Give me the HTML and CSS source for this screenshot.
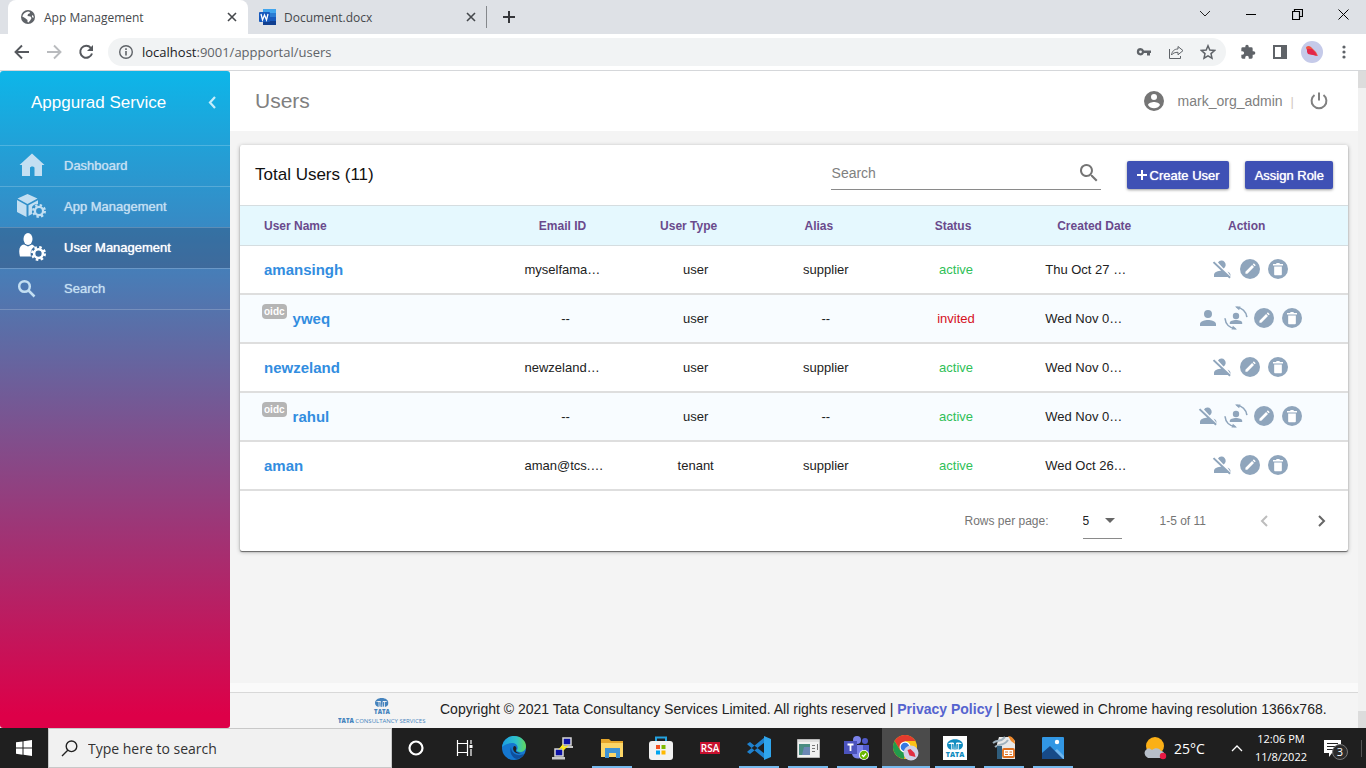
FILE: index.html
```html
<!DOCTYPE html>
<html lang="en">
<head>
<meta charset="utf-8">
<meta name="viewport" content="width=device-width, initial-scale=1">
<title>App Management</title>
<link rel="stylesheet" href="styles.css">
</head>
<body>
<svg class="defs" aria-hidden="true">
  <symbol id="person" viewBox="0 0 24 24"><path d="M12 12a4 4 0 1 0 0-8 4 4 0 0 0 0 8zm0 2c-3 0-8 1.300-8 4v2h16v-2c0-2.700-5-4-8-4z"/></symbol>
  <symbol id="person-off" viewBox="0 0 24 24"><path d="M8 5.500A4.200 4.200 0 1 1 13.500 11.500zM17.500 14.400c1.900.8 3 2 3 3.600v1zM2.800 5.800 4.200 4.400 20.800 20 19.400 21.400zM4 20v-2c0-2.700 4.300-4.200 7.500-4.400l6.500 6.400z"/></symbol>
  <symbol id="transfer" viewBox="0 0 24 24"><circle cx="12" cy="10" r="3.200"/><path d="M12 14c-2.800 0-6.200 1-6.200 2.800V18h12.400v-1.200C18.200 15 14.800 14 12 14z"/><path d="M12.500 1.300c5.500.3 9.700 4.200 10.400 9.800M11.500 22.700C5.600 22.200 1.500 18.200 1 12.300" fill="none" stroke="currentColor" stroke-width="1.600"/><path d="m11 .5 5.500 0-1.400 3.800zM13 23.500l-5.500 0 1.400-3.800z"/></symbol>
  <symbol id="edit" viewBox="0 0 24 24"><circle cx="12" cy="12" r="12"/><path fill="#fff" d="m6.500 15.300 8-8 2.300 2.300-8 8H6.500zM15.300 6.500l1.300-1.300 2.300 2.300-1.300 1.300z"/></symbol>
  <symbol id="trash" viewBox="0 0 24 24"><circle cx="12" cy="12" r="12"/><path fill="#fff" d="M6 6h3.500l1-1.200h3l1 1.200H18v1.800H6zM7.400 9h9.200v9.200c0 .8-.6 1.400-1.400 1.400H8.800c-.8 0-1.400-.6-1.400-1.400z"/></symbol>
  <symbol id="magnify" viewBox="0 0 24 24"><path d="M15.500 14h-.8l-.3-.3A6.500 6.500 0 1 0 13.700 14.400l.3.3v.8l5 5 1.500-1.500zm-6 0a4.500 4.500 0 1 1 0-9 4.500 4.500 0 0 1 0 9z"/></symbol>
  <symbol id="gear" viewBox="0 0 24 24"><circle cx="12" cy="12" r="7" fill="none" stroke="currentColor" stroke-width="4"/><circle cx="12" cy="12" r="10" fill="none" stroke="currentColor" stroke-width="4" stroke-dasharray="4 3.850"/></symbol>
  <symbol id="x" viewBox="0 0 10 10"><path d="m1 1 8 8m0-8-8 8" fill="none" stroke="currentColor" stroke-width="1.600"/></symbol>
  <symbol id="tata" viewBox="0 0 30 20"><path d="M15 0C6 0 0 5 0 11c0 5 4 8 8 9V9H2c3-3 8-3 11-2l1 13h2l1-13c3-1 8-1 11 2h-6v11c4-1 8-4 8-9C30 5 24 0 15 0z"/><path d="M9.500 9.500c2-1 3 0 3 2v8L10 19zM20.500 9.500c-2-1-3 0-3 2v8L20 19z"/></symbol>
</svg>

<header class="browser">
  <div class="tabs">
    <div class="tab tab-active">
      <svg width="16" height="16" viewBox="0 0 16 16"><circle cx="8" cy="8" r="7" fill="#5f6368"/><path fill="#fff" d="M8 2.500c2 0 2.500 1 1.500 2L8 5l-.5 2 3 .5 1 1.500-1 2-2 2.500-1-.5V11L5 9 2.300 7.500C3 5 5 3 8 2.500zM12 6l1.500 1v2L12 8z"/></svg>
      <span class="tab-title">App Management</span>
      <button class="icon-btn" aria-label="Close tab"><svg width="10" height="10"><use href="#x"/></svg></button>
    </div>
    <div class="tab">
      <svg width="17" height="16" viewBox="0 0 17 16"><path fill="#41a5ee" d="M4 0h13v4H4z"/><path fill="#2b7cd3" d="M4 4h13v4H4z"/><path fill="#185abd" d="M4 8h13v4H4z"/><path fill="#103f91" d="M4 12h13v4H4z"/><rect y="3" width="11" height="10" rx="1" fill="#185abd"/><path d="m2 5 1.500 6 2-5 2 5L9 5" fill="none" stroke="#fff" stroke-width="1.300"/></svg>
      <span class="tab-title">Document.docx</span>
      <button class="icon-btn" aria-label="Close tab"><svg width="10" height="10"><use href="#x"/></svg></button>
    </div>
    <button class="icon-btn new-tab" aria-label="New tab"><svg width="12" height="12"><path d="M6 0v12M0 6h12" stroke="#35363a" stroke-width="2"/></svg></button>
    <div class="window-buttons">
      <button class="icon-btn" aria-label="Tab search"><svg width="12" height="8" viewBox="0 0 12 8"><path d="m1 1 5 5 5-5" fill="none" stroke="#222"/></svg></button>
      <button class="icon-btn" aria-label="Minimize"><svg width="10" height="10"><path d="M0 5.500h10" stroke="#000"/></svg></button>
      <button class="icon-btn" aria-label="Restore"><svg width="11" height="11"><path d="M.5 2.500h7v8h-7zM2.500 2.500v-2h8v7h-3" fill="none" stroke="#000" stroke-width="1.200"/></svg></button>
      <button class="icon-btn" aria-label="Close"><svg width="11" height="11"><path d="m.5.5 10 10m0-10-10 10" stroke="#000"/></svg></button>
    </div>
  </div>
  <div class="toolbar">
    <button class="icon-btn nav" aria-label="Back"><svg width="16" height="16" viewBox="0 0 16 16"><path d="M15 8H2m6-6.500L1.500 8 8 14.500" fill="none" stroke="#55585d" stroke-width="1.900"/></svg></button>
    <button class="icon-btn nav" aria-label="Forward"><svg width="16" height="16" viewBox="0 0 16 16"><path d="M1 8h13M8 1.500 14.500 8 8 14.500" fill="none" stroke="#b9bbbe" stroke-width="1.900"/></svg></button>
    <button class="icon-btn nav" aria-label="Reload"><svg width="16" height="16" viewBox="0 0 16 16"><path d="M12.800 3.800A6 6 0 1 0 14 9.500" fill="none" stroke="#55585d" stroke-width="2"/><path d="M15 1v6H9z" fill="#55585d"/></svg></button>
    <div class="omnibox">
      <svg width="16" height="16" viewBox="0 0 16 16"><circle cx="8" cy="8" r="6.300" fill="none" stroke="#5f6368" stroke-width="1.400"/><path d="M8 7v4.500M8 4.300V6" stroke="#5f6368" stroke-width="1.600"/></svg>
      <span class="url"><span class="host">localhost</span>:9001/appportal/users</span>
      <svg width="16" height="16" viewBox="0 0 16 16"><path fill="#5f6368" fill-rule="evenodd" d="M4.500 4a3.700 3.700 0 0 1 3.500 2.500h7V9h-1v2.500h-3V9H8A3.700 3.700 0 1 1 4.500 4zm0 2.400a1.400 1.400 0 1 0 0 2.800 1.400 1.400 0 0 0 0-2.800z"/></svg>
      <svg width="16" height="16" viewBox="0 0 16 16" fill="none" stroke="#5f6368"><path d="M1.500 5v9.500h11V12"/><path d="M10 2.500V5c-4 0-6 2.500-6.500 6C5 9 7 8.300 10 8.300v2.500l5-4.200z"/></svg>
      <svg width="16" height="16" viewBox="0 0 16 16"><path d="m8 1.800 1.800 4.300 4.700.4L11 9.600l1 4.600-4-2.400-4 2.400 1-4.600-3.500-3.100 4.700-.4z" fill="none" stroke="#5f6368" stroke-width="1.500"/></svg>
    </div>
    <button class="icon-btn nav" aria-label="Extensions"><svg width="16" height="16" viewBox="0 0 24 24"><path fill="#5f6368" d="M20.500 11H19V7a2 2 0 0 0-2-2h-4V3.500a2.500 2.500 0 0 0-5 0V5H4a2 2 0 0 0-2 2v3.800h1.500a2.700 2.700 0 0 1 0 5.400H2V20c0 1.100.9 2 2 2h3.800v-1.500a2.700 2.700 0 0 1 5.400 0V22H17a2 2 0 0 0 2-2v-4h1.500a2.500 2.500 0 0 0 0-5z"/></svg></button>
    <button class="icon-btn nav" aria-label="Side panel"><svg width="14" height="14"><path d="M1 1h12v12H1z" fill="none" stroke="#5f6368" stroke-width="2"/><path fill="#5f6368" d="M8 1h5v12H8z"/></svg></button>
    <button class="icon-btn nav" aria-label="Profile"><svg width="22" height="22"><circle cx="11" cy="11" r="11" fill="#c5cae9"/><path fill="#f0533f" d="M5 7c0-2 3-3 5-1l5 5 2 4-4-1-5-1z"/><path fill="#e2274b" d="m6 8 5 0 3 3 2 4-4-1-5-1-1-2z"/></svg></button>
    <button class="icon-btn nav" aria-label="Menu"><svg width="4" height="14" fill="#5f6368"><circle cx="2" cy="2" r="1.600"/><circle cx="2" cy="7" r="1.600"/><circle cx="2" cy="12" r="1.600"/></svg></button>
  </div>
</header>

<div class="app">
  <aside class="sidebar">
    <div class="brand"><span>Appgurad Service</span><button class="icon-btn" aria-label="Collapse sidebar"><svg width="8" height="13" viewBox="0 0 8 13"><path d="M7 1 2 6.500 7 12" fill="none" stroke="#c5edfb" stroke-width="2.200"/></svg></button></div>
    <nav>
      <a class="nav-item" href="#"><svg width="30" height="30" viewBox="0 0 30 30"><path fill="currentColor" d="M15 3.500 27.500 15H25v11h-7.500v-8c0-2-4.500-2-4.500 0v8H5V15H2.500z"/></svg><span>Dashboard</span></a>
      <a class="nav-item" href="#"><svg width="30" height="30" viewBox="0 0 30 30" fill="currentColor"><path d="m10.500 3 10 4.500-10 5.500-10-5.500zM0 9l9.500 5.200V26L0 21zM11.500 14.200l9.500-5V13c-3 0-5 1-6 3v7l-3.500 2z"/><use href="#gear" x="15" y="13" width="14" height="14"/></svg><span>App Management</span></a>
      <a class="nav-item current" href="#" aria-current="page"><svg width="30" height="30" viewBox="0 0 30 30" fill="currentColor"><ellipse cx="11" cy="7" rx="4.500" ry="6"/><path d="M3 24.500C1 17 3 13 7 12.500l4 2 4-2 3 2c-4 2-5 6-4 10z"/><use href="#gear" x="14" y="14" width="15" height="15"/></svg><span>User Management</span></a>
      <a class="nav-item" href="#"><svg width="30" height="30" viewBox="0 0 30 30" fill="none" stroke="currentColor" stroke-width="2.500"><circle cx="7.500" cy="13.500" r="5.300"/><path d="m11.500 17.500 6 6"/></svg><span>Search</span></a>
    </nav>
  </aside>

  <div class="content">
    <header class="page-header">
      <h1>Users</h1>
      <svg width="24" height="24" viewBox="0 0 24 24"><path fill="#757575" fill-rule="evenodd" d="M12 2a10 10 0 1 0 0 20 10 10 0 0 0 0-20zm0 3a3 3 0 1 1 0 6 3 3 0 0 1 0-6zm0 14.200a7.200 7.200 0 0 1-6-3.200c0-2 4-3.100 6-3.100s6 1.100 6 3.100a7.200 7.200 0 0 1-6 3.200z"/></svg>
      <span class="account">mark_org_admin</span>
      <span class="bar">|</span>
      <button class="icon-btn power" aria-label="Log out"><svg width="20" height="20" viewBox="0 0 20 20"><path d="M10 1.500v8M5.500 4a7.400 7.400 0 1 0 9 0" fill="none" stroke="#808080" stroke-width="2"/></svg></button>
    </header>

    <main class="card">
      <div class="card-head">
        <h2>Total Users (11)</h2>
        <div class="search"><input type="search" placeholder="Search" aria-label="Search users"><svg width="24" height="24" viewBox="0 0 24 24" fill="#757575"><use href="#magnify"/></svg></div>
        <button class="btn"><svg width="10" height="10"><path d="M5 0v10M0 5h10" stroke="#fff" stroke-width="2"/></svg>Create User</button>
        <button class="btn">Assign Role</button>
      </div>
      <table>
        <colgroup><col class="w-name"><col class="w-mid"><col class="w-mid"><col class="w-mid"><col class="w-mid"><col class="w-mid"><col></colgroup>
        <thead><tr><th class="name">User Name</th><th class="near">Email ID</th><th>User Type</th><th>Alias</th><th class="near">Status</th><th class="late">Created Date</th><th class="near">Action</th></tr></thead>
        <tbody>
          <tr><td class="name"><a href="#">amansingh</a></td><td><span class="clip">myselfama…</span></td><td>user</td><td>supplier</td><td class="active">active</td><td><span class="clip">Thu Oct 27 …</span></td>
            <td><div class="actions"><button class="icon-btn" aria-label="Deactivate"><svg class="plain"><use href="#person-off"/></svg></button><button class="icon-btn" aria-label="Edit"><svg><use href="#edit"/></svg></button><button class="icon-btn" aria-label="Delete"><svg><use href="#trash"/></svg></button></div></td></tr>
          <tr><td class="name"><div class="tagged"><span class="tag">oidc</span><a href="#">yweq</a></div></td><td>--</td><td>user</td><td>--</td><td class="invited">invited</td><td><span class="clip">Wed Nov 0…</span></td>
            <td><div class="actions"><button class="icon-btn" aria-label="Activate"><svg class="plain"><use href="#person"/></svg></button><button class="icon-btn" aria-label="Transfer"><svg class="plain"><use href="#transfer"/></svg></button><button class="icon-btn" aria-label="Edit"><svg><use href="#edit"/></svg></button><button class="icon-btn" aria-label="Delete"><svg><use href="#trash"/></svg></button></div></td></tr>
          <tr><td class="name"><a href="#">newzeland</a></td><td><span class="clip">newzeland…</span></td><td>user</td><td>supplier</td><td class="active">active</td><td><span class="clip">Wed Nov 0…</span></td>
            <td><div class="actions"><button class="icon-btn" aria-label="Deactivate"><svg class="plain"><use href="#person-off"/></svg></button><button class="icon-btn" aria-label="Edit"><svg><use href="#edit"/></svg></button><button class="icon-btn" aria-label="Delete"><svg><use href="#trash"/></svg></button></div></td></tr>
          <tr><td class="name"><div class="tagged"><span class="tag">oidc</span><a href="#">rahul</a></div></td><td>--</td><td>user</td><td>--</td><td class="active">active</td><td><span class="clip">Wed Nov 0…</span></td>
            <td><div class="actions"><button class="icon-btn" aria-label="Deactivate"><svg class="plain"><use href="#person-off"/></svg></button><button class="icon-btn" aria-label="Transfer"><svg class="plain"><use href="#transfer"/></svg></button><button class="icon-btn" aria-label="Edit"><svg><use href="#edit"/></svg></button><button class="icon-btn" aria-label="Delete"><svg><use href="#trash"/></svg></button></div></td></tr>
          <tr><td class="name"><a href="#">aman</a></td><td><span class="clip">aman@tcs.…</span></td><td>tenant</td><td>supplier</td><td class="active">active</td><td><span class="clip">Wed Oct 26…</span></td>
            <td><div class="actions"><button class="icon-btn" aria-label="Deactivate"><svg class="plain"><use href="#person-off"/></svg></button><button class="icon-btn" aria-label="Edit"><svg><use href="#edit"/></svg></button><button class="icon-btn" aria-label="Delete"><svg><use href="#trash"/></svg></button></div></td></tr>
        </tbody>
      </table>
      <div class="pager">
        <label for="rows">Rows per page:</label>
        <span class="select"><select id="rows"><option>5</option><option>10</option></select><svg width="10" height="5"><path fill="#666" d="M0 0h10L5 5z"/></svg></span>
        <span class="range">1-5 of 11</span>
        <button class="icon-btn page" aria-label="Previous page" disabled><svg width="8" height="12" viewBox="0 0 8 12"><path d="M7 1 2 6l5 5" fill="none" stroke="#bdbdbd" stroke-width="2"/></svg></button>
        <button class="icon-btn page" aria-label="Next page"><svg width="8" height="12" viewBox="0 0 8 12"><path d="m1 1 5 5-5 5" fill="none" stroke="#666" stroke-width="2"/></svg></button>
      </div>
    </main>

    <footer class="page-footer">
      <svg width="88" height="26" viewBox="0 0 176 52" fill="#4583bd"><use href="#tata" x="74" y="0" width="27" height="18"/><text x="88" y="31" text-anchor="middle" class="logo-bold">TATA</text><text x="0" y="49" class="logo-line"><tspan class="logo-bold">TATA</tspan> CONSULTANCY SERVICES</text></svg>
      <p>Copyright © 2021 Tata Consultancy Services Limited. All rights reserved | <a href="#">Privacy Policy</a> | Best viewed in Chrome having resolution 1366x768.</p>
    </footer>
  </div>
  <div class="scrollbar"><i></i><i></i></div>
</div>

<footer class="taskbar">
  <button class="icon-btn start" aria-label="Start"><svg width="16" height="16" viewBox="0 0 16 16" fill="#fff"><path d="m0 2.300 6.500-.9v6.200H0zM7.500 1.200 16 0v7.600H7.500zM0 8.500h6.500v6.200L0 13.800zM7.500 8.500H16V16l-8.500-1.200z"/></svg></button>
  <label class="os-search"><svg width="17" height="17" viewBox="0 0 17 17"><path d="M6.500 10.500 1 16M10.500 1a5.300 5.300 0 1 1 0 10.600 5.300 5.300 0 0 1 0-10.600z" fill="none" stroke="#222" stroke-width="1.400"/></svg><input type="text" placeholder="Type here to search"></label>
  <div class="apps">
    <button class="icon-btn" aria-label="Cortana"><svg width="18" height="18"><circle cx="9" cy="9" r="6.500" fill="none" stroke="#fff" stroke-width="2.200"/></svg></button>
    <button class="icon-btn" aria-label="Task view"><svg width="18" height="18" fill="none" stroke="#fff" stroke-width="1.200"><path d="M1.500 1v3.500h10V1M1.500 17v-3.500h10V17M1.500 4.500v9M11.500 4.500v9M15 1v4M15 10v7"/><path d="M13.500 6h3v3h-3z" fill="#fff" stroke="none"/></svg></button>
    <button class="icon-btn" aria-label="Edge"><svg width="24" height="24" viewBox="0 0 24 24"><defs><linearGradient id="eg"><stop stop-color="#1b9de2"/><stop offset=".6" stop-color="#2fc2c9"/><stop offset="1" stop-color="#62d75a"/></linearGradient></defs><circle cx="12" cy="12" r="12" fill="#1577cf"/><path fill="url(#eg)" d="M0 11C1 4 6 0 12 0c7 0 12 5 12 10 0 4-3 6-6 6-2 0-4-1-3-2 2-4-1-7-5-7-5 0-9 3-10 4z"/><path fill="#0f4f9c" d="M9 11c-2 5 1 11 6 12 4-.5 6-3 7-5-6 3-13 0-13-7z"/><path fill="#202020" d="M12 10c2 0 3 2 2 4s2 3 5 3c-5 2-10-3-7-7z"/></svg></button>
    <button class="icon-btn" aria-label="PuTTY"><svg width="24" height="24" viewBox="0 0 24 24"><g stroke="#d8d8d8" stroke-width="1.500" fill="#0d12a5"><path d="M12 2h8v7h-8zM4 13h8v7H4z"/></g><path fill="#c9c9c9" d="M10 10h12v2H10zM1 21h13v2.500H1z"/><path fill="#ffea17" d="m7 14 5-6 1 3 5-2-6 6-1-3z"/></svg></button>
    <button class="icon-btn open" aria-label="File Explorer"><svg width="24" height="22" viewBox="0 0 24 22"><path fill="#e5a62b" d="M1 2h8l2 2h12v5H1z"/><path fill="#fcd667" d="M1 6h22v14H1z"/><path fill="#3f93d4" d="M5 11h15v10h-4v-5H9v5H5z"/></svg></button>
    <button class="icon-btn" aria-label="Store"><svg width="24" height="24" viewBox="0 0 24 24"><path d="M7 7V1.500h10V7" fill="none" stroke="#24a2df" stroke-width="2"/><rect y="5" width="24" height="19" rx="3" fill="#f2f2f2"/><path fill="#f25022" d="M7 9h4v4H7z"/><path fill="#7fba00" d="M12.500 9h4v4h-4z"/><path fill="#00a4ef" d="M7 14.500h4v4H7z"/><path fill="#ffb900" d="M12.500 14.500h4v4h-4z"/></svg></button>
    <button class="icon-btn rsa" aria-label="RSA"><span>RSA</span></button>
    <button class="icon-btn open" aria-label="Visual Studio Code"><svg width="24" height="24" viewBox="0 0 24 24"><path fill="#1f82cf" d="m0 8 3-2 15 12v5L1 9zM0 16l3 2L18 6V1L1 15z"/><path fill="#2fa5ec" d="m17 0 7 3v18l-7 3z"/></svg></button>
    <button class="icon-btn open" aria-label="Report viewer"><svg width="23" height="19" viewBox="0 0 23 19"><path fill="#f1f1f1" stroke="#b9b9b9" d="M.5.5h22v18H.5z"/><path fill="#dedede" d="M1 1h21v2H1z"/><path fill="#4a8c82" d="M2 5h11v11H2z"/><path fill="#6c87b5" d="M7 8h6v8H5z"/><path stroke="#777" d="M15 6.500h3M15 9.500h3M15 12.500h3M20.500 5v6"/></svg></button>
    <button class="icon-btn open" aria-label="Teams"><svg width="26" height="26" viewBox="0 0 26 26"><circle cx="13" cy="5" r="4" fill="#7b83eb"/><circle cx="21" cy="6" r="3" fill="#5059c9"/><path fill="#5059c9" d="M17 10h8v8c0 2-4 4-8 3z"/><path fill="#7b83eb" d="M8 10h11v9c0 6-10 6-11 0z"/><rect y="6" width="13" height="13" fill="#4b53bc"/><path stroke="#fff" stroke-width="1.800" d="M3.500 9.500h6M6.500 9.500V16"/><circle cx="20" cy="20" r="5" fill="#fff"/><circle cx="20" cy="20" r="4.200" fill="#6bb700"/><path d="m18 20 1.500 1.500L22 18.500" fill="none" stroke="#fff" stroke-width="1.300"/></svg></button>
    <button class="icon-btn open selected" aria-label="Chrome"><svg width="26" height="26" viewBox="0 0 26 26"><circle cx="12" cy="12" r="12" fill="#fbc116"/><path fill="#e33b2e" d="M1.600 6A12 12 0 0 1 22.400 6H12L7 15z"/><path fill="#229a4c" d="M1.600 6 7 15l5 3-1 6A12 12 0 0 1 1.600 6z"/><circle cx="12" cy="12" r="5.500" fill="#fff"/><circle cx="12" cy="12" r="4.300" fill="#3579e3"/><circle cx="18" cy="18" r="7.500" fill="#cfd1e8"/><path fill="#e22d42" d="m14.500 15 3-1 4 4 1 4-6-1.500z"/></svg></button>
    <button class="icon-btn open" aria-label="Tata"><svg width="24" height="24" viewBox="0 0 24 24"><path fill="#fff" d="M0 0h24v24H0z"/><use href="#tata" x="4" y="3" width="16" height="11" fill="#118cc0"/><text x="12" y="21" text-anchor="middle" class="tata-app">TATA</text></svg></button>
    <button class="icon-btn open" aria-label="OpenOffice Impress"><svg width="24" height="24" viewBox="0 0 24 24"><path fill="#e9e9e9" d="M7 1h12l4 4v18H5V8z"/><path fill="#ef8a2c" d="M16 0c4 0 7 3 7 8l-4-3z"/><path d="M1 7c5-4 7 0 12-6M3 11c5-4 8 0 13-7" fill="none" stroke="#9fb1bd" stroke-width="2"/><path fill="#2f5d7c" d="M5 10h5v13H5z"/><rect x="11" y="13" width="11" height="8" rx="1" fill="#fff" stroke="#df7020" stroke-width="1.800"/><path stroke="#df7020" d="M13 16h3M13 18.500h3M17.500 16H20M17.500 18.500H20"/></svg></button>
    <button class="icon-btn open" aria-label="Photos"><svg width="22" height="22" viewBox="0 0 22 22"><rect width="22" height="22" rx="1" fill="#3297e4"/><path fill="#6eb5ec" d="m10 16 5-4 7 7v3H10z"/><path fill="#174a87" d="m0 16 8-7 13 13H0z"/><circle cx="15" cy="5" r="2.200" fill="#fff"/></svg></button>
  </div>
  <div class="tray">
    <svg width="24" height="24" viewBox="0 0 24 24"><circle cx="12" cy="10" r="9" fill="#fbb016"/><path fill="#b7bfc9" d="M5 22a5 5 0 0 1-1-9c2-1 4 0 5 1 3-3 8-2 9 1 4 0 5 6 1 7z"/><circle cx="20" cy="20" r="3.200" fill="#e81944"/></svg>
    <span class="temp">25°C</span>
    <svg width="12" height="8" viewBox="0 0 12 8"><path d="m1 7 5-5 5 5" fill="none" stroke="#fff" stroke-width="1.300"/></svg>
    <time><span>12:06 PM</span><span>11/8/2022</span></time>
    <span class="notice"><svg width="17" height="17" viewBox="0 0 17 17"><path fill="#fff" d="M0 0h17v13H8l-3 4v-4H0z"/><path stroke="#222" d="M3 3.500h11M3 6.500h11M3 9.500h7"/></svg><b>3</b></span>
  </div>
</footer>
</body>
</html>
```
FILE: styles.css
```css
* { box-sizing: border-box; }
body { margin: 0; min-height: 100vh; display: flex; flex-direction: column; font: 13px "Liberation Sans", Arial, sans-serif; color: #222; background: #f4f4f4; }
h1, h2, p { margin: 0; font-weight: 400; }
button, input, select { font: inherit; }
a { text-decoration: none; }
svg { display: block; flex: none; }
.defs { position: absolute; width: 0; height: 0; }
.icon-btn { display: flex; align-items: center; justify-content: center; padding: 0; border: 0; background: none; color: #45484c; }

/* Browser chrome */
.browser { font-family: "Open Sans", "Noto Sans", sans-serif; background: #dee1e6; }
.tabs { display: flex; height: 34px; padding-left: 8px; }
.tab { display: flex; align-items: center; width: 239px; padding: 0 10px 0 11px; font-size: 12px; color: #45484c; border-right: 1px solid #85888c; border-image: linear-gradient(transparent 20%, #85888c 20% 80%, transparent 80%) 1; }
.tab-active { width: 240px; padding: 0 11px 0 12px; background: #fff; border: 0; border-radius: 8px 8px 0 0; }
.tab-title { flex: 1; padding-left: 8px; }
.new-tab { width: 44px; }
.window-buttons { display: flex; margin-left: auto; padding-bottom: 6px; }
.window-buttons .icon-btn { width: 46px; }
.toolbar { display: flex; align-items: center; height: 37px; padding: 0 6px; background: #fff; border-bottom: 1px solid #d5d7da; }
.nav { width: 32px; height: 32px; }
.omnibox { flex: 1; display: flex; align-items: center; gap: 16px; height: 28px; margin: 0 6px; padding: 0 10px; border-radius: 14px; background: #f1f3f4; }
.url { flex: 1; margin-left: -8px; font-size: 13px; color: #5f6368; }
.host { color: #202124; }

/* Application shell */
.app { flex: 1; display: flex; }
.sidebar { width: 230px; border-radius: 3px; overflow: hidden; background: linear-gradient(#0db6e9 0%, #3a87c2 25%, #5672ab 37%, #dd0048 98%, #dd0048 100%); }
.brand { display: flex; align-items: center; justify-content: space-between; height: 74px; padding: 0 14px 11px 31px; font-size: 17px; color: #fff; }
.nav-item { display: flex; align-items: center; gap: 17px; height: 41px; padding: 0 0 2px 17px; border-top: 1px solid rgba(255,255,255,.2); color: #c3dff2; text-shadow: 0 0 1px currentColor; }
.nav-item:last-child { height: 42px; border-bottom: 1px solid rgba(255,255,255,.2); }
.nav-item.current { color: #fff; background: rgba(45,60,90,.3); }
.content { flex: 1; display: flex; flex-direction: column; min-width: 0; }
.page-header { display: flex; align-items: center; height: 60px; padding: 0 29px 0 25px; background: #fff; color: #808080; }
.page-header h1 { flex: 1; font-size: 21px; }
.account { margin-left: 12px; font-size: 14px; }
.bar { margin: 0 15px 0 8px; color: #d3c8c0; }
.scrollbar { display: flex; flex-direction: column; justify-content: space-between; width: 8px; background: #f1f1f1; }
.scrollbar i { height: 17px; background: #dcdcdc; }

/* Users card */
.card { margin: 14px 10px auto; background: #fff; border-radius: 2px; box-shadow: 0 1px 1px #666, 0 1px 4px rgba(0,0,0,.3); }
.card-head { display: flex; align-items: center; gap: 16px; height: 60px; padding: 0 15px; }
.card-head h2 { flex: 1; font-size: 17px; color: #111; }
.search { display: flex; align-items: center; width: 270px; height: 34px; margin: 0 10px 4px 0; border-bottom: 1px solid #8a8a8a; }
.search input { flex: 1; min-width: 0; padding: 0 1px; border: 0; outline: 0; background: none; font-size: 14px; }
.search input::placeholder { color: #808080; }
.btn { display: flex; align-items: center; justify-content: center; gap: 3px; height: 28px; padding: 0 9px 0 10px; border: 0; border-radius: 2px; background: #3f51b5; color: #fff; text-shadow: 0 0 1px #fff; box-shadow: 0 1px 3px rgba(0,0,0,.4); }
table { width: 100%; table-layout: fixed; border-collapse: separate; border-spacing: 0; }
.w-name { width: 23.5%; }
.w-mid { width: 11.75%; }
th { height: 41px; padding: 0 14px 0 0; border: solid #d5dde0; border-width: 1px 0; background: #e5f8fe; font-size: 12px; color: #6a4a8c; }
th.near { padding-right: 6px; }
th.late { padding: 0 0 0 16px; }
td { height: 49px; padding: 0; border-bottom: 2px solid #dedede; text-align: center; }
tr:nth-child(even) td { background: #f8fcff; }
th.name, td.name { padding-left: 24px; text-align: left; }
td.name a { font-size: 15px; font-weight: 700; color: #328de0; }
.tagged { display: flex; align-items: center; gap: 6px; margin-left: -2px; }
.tag { margin-bottom: 14px; padding: 0 2px; border-radius: 4px; background: #b5b5b5; color: #fff; font-size: 10px; font-weight: 700; line-height: 15px; }
.clip { display: inline-block; width: 82px; text-align: left; white-space: nowrap; }
.active { color: #30bf58; }
.invited { color: #d6101e; }
.actions { display: flex; justify-content: center; gap: 4px; padding-bottom: 1px; }
.actions .icon-btn { width: 24px; height: 24px; color: #8fa5bc; }
.actions svg { width: 20px; height: 20px; fill: currentColor; }
.actions .plain { width: 24px; height: 24px; }
.pager { display: flex; align-items: center; height: 60px; padding-right: 2px; font-size: 12px; color: #757575; }
.pager label { margin-left: auto; }
.select { display: flex; align-items: center; width: 39px; height: 36px; margin: 0 38px 0 34px; border-bottom: 1px solid #8a8a8a; }
.select select { width: 39px; height: 34px; margin-right: -17px; padding: 0; border: 0; appearance: none; background: none; color: #222; }
.select svg { pointer-events: none; }
.range { margin-right: 34px; }
.page { width: 48px; height: 48px; }
.page + .page { margin-left: 10px; }

.page-footer { display: flex; align-items: center; gap: 14px; height: 36px; padding: 0 0 2px 108px; border-top: 1px solid #d8d8d8; box-shadow: 0 -9px #fafafa; font-size: 14px; white-space: nowrap; }
.page-footer p { padding-bottom: 2px; }
.page-footer svg { margin-top: 2px; }
.page-footer a { font-weight: 700; color: #5563cf; }
.logo-line { font: 12px "Open Sans", sans-serif; }
.logo-bold { font: 800 12px "Open Sans", sans-serif; }

/* Desktop taskbar */
.taskbar { display: flex; height: 40px; background: #1f1f1f; font-family: "Open Sans", "Noto Sans", sans-serif; }
.start { width: 48px; }
.os-search { display: flex; align-items: center; gap: 10px; width: 344px; padding-left: 12px; background: #f1f1f1; border: 1px solid #c8c8c8; }
.os-search input { flex: 1; min-width: 0; padding: 0; border: 0; outline: 0; background: none; font-size: 14px; }
.os-search input::placeholder { color: #333; }
.apps { display: flex; gap: 1px; }
.apps .icon-btn { width: 48px; }
.open { background: linear-gradient(#76b9ed, #76b9ed) center bottom / 40px 2px no-repeat; }
.apps .selected { background-color: #4b4b4b; background-size: 48px 2px; }
.rsa span { padding: 0 1px; background: #c8102e; color: #fff; font-size: 10px; font-weight: 600; line-height: 12px; }
.tata-app { font: 800 7px "Open Sans", sans-serif; fill: #118cc0; }
.tray { display: flex; align-items: center; margin-left: auto; padding-right: 4px; color: #fff; }
.temp { margin: 0 26px 0 7px; font-size: 14px; }
.tray time { display: flex; flex-direction: column; align-items: center; margin: 0 17px 0 12px; font-size: 11px; line-height: 18px; }
.notice { position: relative; display: block; padding-right: 20px; border-right: 1px solid #555; }
.notice b { position: absolute; left: 8px; top: 4px; width: 16px; height: 16px; border: 1px solid #777; border-radius: 50%; background: #2b2b2b; font-size: 11px; font-weight: 400; line-height: 14px; text-align: center; }
```
